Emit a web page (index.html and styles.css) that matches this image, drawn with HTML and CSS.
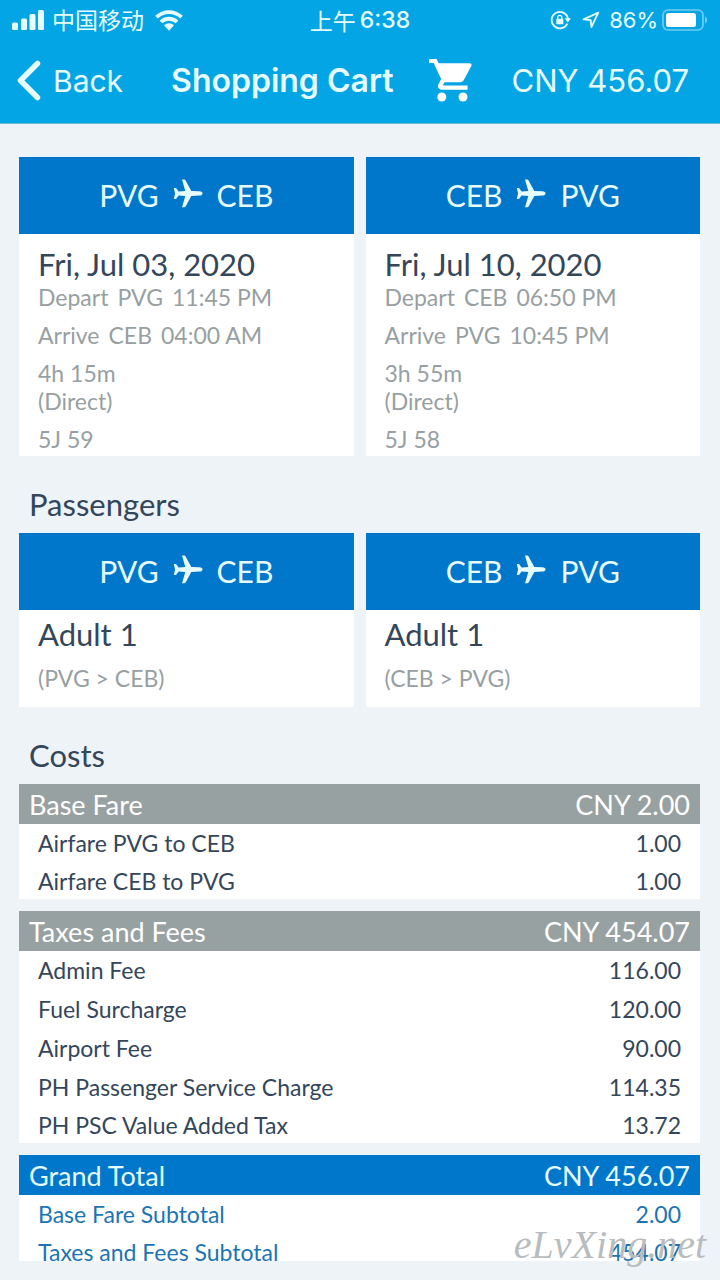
FILE: index.html
```html
<!DOCTYPE html>
<html lang="en">
<head>
<meta charset="utf-8">
<meta name="viewport" content="width=device-width, initial-scale=1">
<title>Shopping Cart</title>
<link rel="stylesheet" href="styles.css">
</head>
<body>
<svg class="sprite" aria-hidden="true">
  <symbol id="plane" viewBox="0 0 30 29">
    <path d="M9 .6h2.300c.6 0 1 .3 1.300.8L18.300 11.900l8.200.3c1.900.1 3 1 3 2.200s-1.100 2.100-3 2.200l-8.200.3-5.700 10.500c-.3.5-.7.8-1.300.8H9l3.300-11.300-6.700-.5-2.600 3.500H.8l1.300-5.500L.8 8.900H3l2.600 3.500 6.700-.5z"/>
  </symbol>
</svg>
<header class="topbar">
  <div class="status">
    <div class="status-group">
      <svg class="signal" viewBox="0 0 32 20" aria-hidden="true"><rect x="0" y="12.500" width="6" height="7.500" rx="1.500"/><rect x="9" y="8.500" width="6" height="11.500" rx="1.500"/><rect x="17.500" y="4" width="6" height="16" rx="1.500"/><rect x="26" y="0" width="6" height="20" rx="1.500"/></svg>
      <span class="carrier">中国移动</span>
      <svg class="wifi" viewBox="0 0 28 21" aria-hidden="true"><path d="M1.500 7.200a18 18 0 0 1 25 0M6 12a11.500 11.500 0 0 1 16 0" fill="none" stroke="currentColor" stroke-width="3.800"/><path d="M9 15.200a7.400 7.400 0 0 1 10 0L14 20.800z"/></svg>
    </div>
    <div class="time"><span>上午</span><span class="clock">6:38</span></div>
    <div class="status-group status-end">
      <svg class="lock" viewBox="0 0 21 20" aria-hidden="true"><path d="M17.300 13.600A8.200 8.200 0 1 1 18 9" fill="none" stroke="currentColor" stroke-width="1.800"/><path d="M14.600 8.200H21l-3.200 4.200z"/><rect x="6.300" y="8.800" width="7" height="5.400" rx=".8"/><path d="M7.700 9V7.500a2.100 2.100 0 0 1 4.200 0V9" fill="none" stroke="currentColor" stroke-width="1.300"/></svg>
      <svg class="location" viewBox="0 0 18 18" aria-hidden="true"><path d="M16.300 1.600 1.600 8.400l7 .8.800 7z" fill="none" stroke="currentColor" stroke-width="1.800" stroke-linejoin="round"/></svg>
      <span class="percent">86%</span>
      <svg class="battery" viewBox="0 0 46 22" aria-hidden="true"><rect x="1" y="1" width="40" height="20" rx="5" fill="none" stroke="currentColor" stroke-width="1.600" opacity=".45"/><rect x="4" y="4" width="30" height="14" rx="2.500"/><path d="M43 7.500c2.800 1 2.800 6 0 7z" opacity=".45"/></svg>
    </div>
  </div>
  <nav class="nav">
    <button class="back" type="button"><svg class="chevron" viewBox="0 0 24 42" aria-hidden="true"><path d="M20.500 3.500 3.500 20.500l17 17" fill="none" stroke="currentColor" stroke-width="5.500" stroke-linecap="round" stroke-linejoin="round"/></svg>Back</button>
    <h1 class="title">Shopping Cart</h1>
    <button class="cart" type="button" aria-label="Cart"><svg viewBox="0 0 43 43" aria-hidden="true"><path d="M0 0h7.500l2.200 4.300h30.800c1.800 0 2.600 1.300 1.800 2.800L34.800 21c-.8 1.400-2 2.200-3.600 2.200H15.600L13.800 26.600h24.800v4.200H13c-3.200 0-5-3-3.500-5.800l2.700-5.100L4.600 3.900H0z"/><circle cx="12.800" cy="38" r="4.500"/><circle cx="34" cy="38" r="4.500"/></svg></button>
    <span class="total">CNY 456.07</span>
  </nav>
</header>
<main class="content">
  <section class="pair">
    <article class="card">
      <h2 class="route">PVG <svg><use href="#plane"/></svg> CEB</h2>
      <div class="flight">
        <h3>Fri, Jul 03, 2020</h3>
        <p class="leg"><span>Depart</span><span>PVG</span><span>11:45 PM</span></p>
        <p class="leg"><span>Arrive</span><span>CEB</span><span>04:00 AM</span></p>
        <p>4h 15m<br>(Direct)</p>
        <p>5J 59</p>
      </div>
    </article>
    <article class="card">
      <h2 class="route">CEB <svg><use href="#plane"/></svg> PVG</h2>
      <div class="flight">
        <h3>Fri, Jul 10, 2020</h3>
        <p class="leg"><span>Depart</span><span>CEB</span><span>06:50 PM</span></p>
        <p class="leg"><span>Arrive</span><span>PVG</span><span>10:45 PM</span></p>
        <p>3h 55m<br>(Direct)</p>
        <p>5J 58</p>
      </div>
    </article>
  </section>
  <h2 class="heading">Passengers</h2>
  <section class="pair">
    <article class="card">
      <h2 class="route">PVG <svg><use href="#plane"/></svg> CEB</h2>
      <div class="passenger"><h3>Adult 1</h3><p>(PVG &gt; CEB)</p></div>
    </article>
    <article class="card">
      <h2 class="route">CEB <svg><use href="#plane"/></svg> PVG</h2>
      <div class="passenger"><h3>Adult 1</h3><p>(CEB &gt; PVG)</p></div>
    </article>
  </section>
  <h2 class="heading">Costs</h2>
  <section class="costs">
    <table class="cost">
      <thead><tr><th scope="col">Base Fare</th><th scope="col">CNY 2.00</th></tr></thead>
      <tbody>
        <tr><td>Airfare PVG to CEB</td><td>1.00</td></tr>
        <tr><td>Airfare CEB to PVG</td><td>1.00</td></tr>
      </tbody>
    </table>
    <table class="cost">
      <thead><tr><th scope="col">Taxes and Fees</th><th scope="col">CNY 454.07</th></tr></thead>
      <tbody>
        <tr><td>Admin Fee</td><td>116.00</td></tr>
        <tr><td>Fuel Surcharge</td><td>120.00</td></tr>
        <tr><td>Airport Fee</td><td>90.00</td></tr>
        <tr><td>PH Passenger Service Charge</td><td>114.35</td></tr>
        <tr><td>PH PSC Value Added Tax</td><td>13.72</td></tr>
      </tbody>
    </table>
    <table class="cost grand">
      <thead><tr><th scope="col">Grand Total</th><th scope="col">CNY 456.07</th></tr></thead>
      <tbody>
        <tr><td>Base Fare Subtotal</td><td>2.00</td></tr>
        <tr><td>Taxes and Fees Subtotal</td><td>454.07</td></tr>
      </tbody>
    </table>
  </section>
</main>
<div class="watermark">eLvXing.net</div>
</body>
</html>
```

FILE: styles.css
```css
* { box-sizing: border-box; }
body {
  margin: 0;
  height: 100vh;
  display: flex;
  flex-direction: column;
  position: relative;
  overflow: hidden;
  background: #edf3f6;
  color: #34465a;
  font-family: Lato, "Noto Sans CJK SC", sans-serif;
}
h1, h2, h3, p { margin: 0; font-weight: 400; }
svg { display: block; fill: currentColor; flex: none; }
button { padding: 0; border: 0; background: none; color: inherit; font: inherit; }
.sprite { position: absolute; width: 0; height: 0; }

.topbar {
  flex: none;
  background: #03a5e4;
  border-bottom: 1px solid #6fb4d2;
  color: #e6fcff;
  font-family: Inter, "Noto Sans CJK SC", sans-serif;
}
.status {
  display: grid;
  grid-template-columns: 1fr auto 1fr;
  align-items: center;
  height: 40px;
  padding: 0 12px;
  font-size: 23px;
}
.status-group { display: flex; align-items: center; }
.status-end { justify-content: flex-end; }
.signal { width: 32px; height: 20px; margin-right: 8px; }
.carrier { padding-bottom: 2px; }
.wifi { width: 28px; height: 21px; margin-left: 11px; }
.time { display: flex; align-items: center; gap: 4px; padding-bottom: 1px; }
.clock { font-weight: 500; }
.lock { width: 21px; height: 20px; margin-right: 11px; }
.location { width: 18px; height: 18px; margin-right: 9px; }
.percent { margin-right: 4px; font-size: 22px; }
.battery { width: 46px; height: 22px; color: #fff; }

.nav {
  display: flex;
  align-items: center;
  height: 83px;
  padding: 0 31px 2px 17px;
  font-size: 31px;
}
.back { display: flex; align-items: center; gap: 12px; font-size: 30px; }
.chevron { width: 24px; height: 42px; }
.title { margin-left: 48px; font-size: 32px; font-weight: 600; }
.cart { margin-left: 36px; color: #fff; }
.cart svg { width: 43px; height: 43px; }
.total { margin-left: auto; }

.content {
  flex: 1;
  min-height: 0;
  overflow: hidden;
  margin-bottom: 19px;
  padding: 33px 20px 0 19px;
}
.pair { display: grid; grid-template-columns: 1fr 1fr; gap: 12px; }
.card { background: #fff; }
.route {
  display: flex;
  align-items: center;
  justify-content: center;
  gap: 14px;
  height: 77px;
  padding-bottom: 2px;
  background: #0077cb;
  color: #e6fcff;
  font-size: 30px;
}
.route svg { width: 30px; height: 29px; margin-bottom: 2px; }
.card h3 { font-size: 31px; line-height: 37px; }
.card p { color: #989fa2; font-size: 23px; line-height: 28px; }
.flight { padding: 12px 19px 3px; }
.flight p + p { margin-top: 10px; }
.leg { display: flex; gap: 9px; }
.passenger { padding: 6px 19px 15px; }
.passenger p { margin-top: 11px; }
.heading {
  margin: 30px 10px 10px;
  font-size: 31px;
  line-height: 37px;
}

.costs { display: grid; gap: 12px; }
.cost { width: 100%; border-collapse: collapse; background: #fff; }
.cost th {
  padding: 2px 10px 0;
  background: #98a1a2;
  color: #fff;
  font-size: 27px;
  font-weight: 400;
  line-height: 38px;
  text-align: left;
}
.cost td { padding: 1px 19px 2px; font-size: 23px; line-height: 36px; }
.cost tr:last-child td { padding-bottom: 0; line-height: 35px; }
.cost th:last-child, .cost td:last-child { text-align: right; }
.grand { color: #1c74b3; }
.grand th { background: #0077cb; color: #e6fcff; }

.watermark {
  position: absolute;
  right: 14px;
  bottom: 14px;
  color: #b9bcbf;
  font: italic 40px/42px "Liberation Serif", serif;
}
```
